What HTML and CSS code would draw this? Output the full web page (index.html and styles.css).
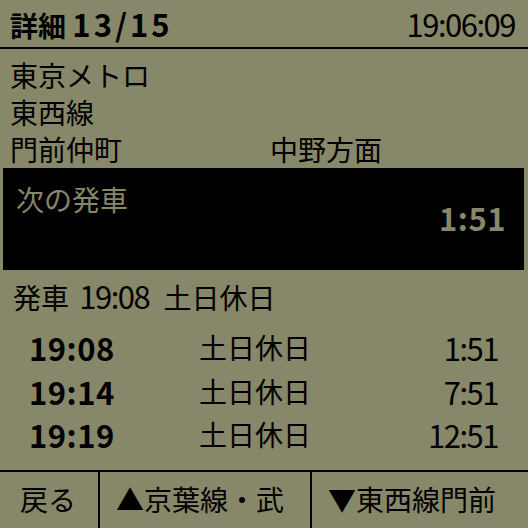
FILE: index.html
```html
<!DOCTYPE html>
<html lang="ja">
<head>
<meta charset="utf-8">
<title>詳細</title>
<link rel="stylesheet" href="styles.css">
</head>
<body>
<div class="screen">
  <header class="header">
    <div class="title">詳細 <span class="bnum">13/15</span></div>
    <div class="clock num">19:06:09</div>
  </header>
  <section class="info">
    <div class="line">東京メトロ</div>
    <div class="line">東西線</div>
    <div class="line two">
      <span>門前仲町</span>
      <span>中野方面</span>
    </div>
  </section>
  <section class="next">
    <div class="next-label">次の発車</div>
    <div class="next-value bnum">1:51</div>
  </section>
  <div class="depart">発車 <span class="num">19:08</span> 土日休日</div>
  <section class="table">
    <div class="row"><span class="bnum t">19:08</span><span class="d">土日休日</span><span class="num r">1:51</span></div>
    <div class="row"><span class="bnum t">19:14</span><span class="d">土日休日</span><span class="num r">7:51</span></div>
    <div class="row"><span class="bnum t">19:19</span><span class="d">土日休日</span><span class="num r">12:51</span></div>
  </section>
  <footer class="footer">
    <div class="btn b1">戻る</div>
    <div class="btn b2">▲京葉線・武</div>
    <div class="btn b3">▼東西線門前</div>
  </footer>
</div>
</body>
</html>
```
FILE: styles.css
```css
html, body {
  margin: 0;
  padding: 0;
  background: #878769;
}
body {
  font-family: "Noto Sans CJK JP", "Noto Sans", sans-serif;
  font-size: 28px;
  color: #000;
}
.screen {
  width: 528px;
  height: 528px;
  overflow: hidden;
  display: flex;
  flex-direction: column;
}
.num {
  font-family: "Noto Sans CJK JP", sans-serif;
  font-size: 31px;
  letter-spacing: -1.5px;
}
.bnum {
  font-family: "Noto Sans CJK JP", sans-serif;
  font-weight: 700;
  font-size: 31px;
  letter-spacing: 0.5px;
}
.header {
  height: 42px;
  padding: 5px 13px 0 10px;
  border-bottom: 2px solid #000;
  display: flex;
  justify-content: space-between;
  line-height: 38px;
}
.title {
  font-weight: 700;
}
.title .bnum {
  letter-spacing: 3px;
}
.info {
  padding: 8px 0 0 10px;
}
.line {
  line-height: 37px;
  height: 37px;
  white-space: nowrap;
}
.two {
  display: grid;
  grid-template-columns: 260px 1fr;
}
.next {
  margin: 0 4px 0 3px;
  height: 90px;
  padding-top: 12px;
  background: #000;
  color: #878769;
  display: flex;
  flex-direction: column;
}
.next-label {
  padding-left: 13px;
  line-height: 38px;
}
.next-value {
  align-self: flex-end;
  margin-top: -19px;
  padding-right: 18px;
  line-height: 38px;
}
.depart {
  margin-top: 7px;
  padding-left: 13px;
  line-height: 38px;
  white-space: nowrap;
}
.depart .num {
  margin: 0 8px 0 4px;
}
.table {
  margin-top: 10px;
  padding: 0 30px 0 29px;
}
.row {
  display: grid;
  grid-template-columns: 170px 1fr auto;
  line-height: 43.5px;
  height: 43.5px;
}
.row .r {
  text-align: right;
}
.footer {
  margin-top: 13px;
  border-top: 2px solid #000;
  flex: 1;
  display: grid;
  grid-template-columns: 100px 212px 1fr;
}
.btn {
  padding-top: 8px;
  line-height: 38px;
  white-space: nowrap;
  overflow: hidden;
}
.b1 {
  padding-left: 20px;
  border-right: 2px solid #000;
}
.b2 {
  padding-left: 16px;
  border-right: 2px solid #000;
}
.b3 {
  padding-left: 16px;
}
```
